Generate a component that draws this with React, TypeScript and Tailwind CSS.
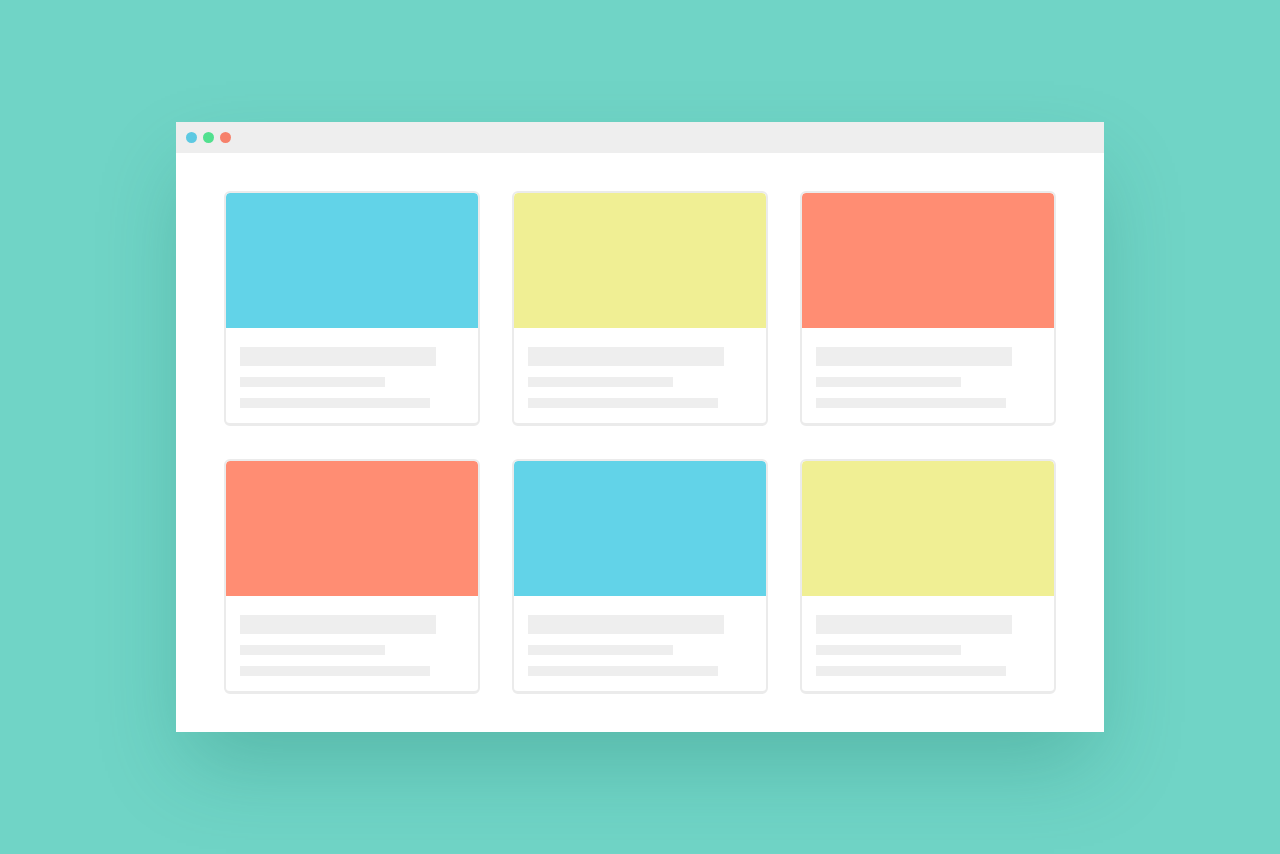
const CARDS = ["#62d3e8", "#f0ef94", "#ff8d73", "#ff8d73", "#62d3e8", "#f0ef94"];

function Card({ color }: { color: string }) {
  return (
    <div className="flex h-[235px] flex-col overflow-hidden rounded-[6px] border-2 border-b-[3px] border-[#ebebeb] bg-white">
      <div className="h-[135px] rounded-t-[4px]" style={{ backgroundColor: color }} />
      <div className="flex flex-col px-[12px] pt-[19px]">
        <div className="ml-[2px] h-[19px] w-[196px] bg-[#eeeeee]" />
        <div className="ml-[2px] mt-[11px] h-[10px] w-[145px] bg-[#eeeeee]" />
        <div className="ml-[2px] mt-[11px] h-[10px] w-[190px] bg-[#eeeeee]" />
      </div>
    </div>
  );
}

export default function App() {
  return (
    <main className="flex h-[854px] w-full items-center justify-center bg-[#70d4c6]">
      <div className="w-[928px] bg-white shadow-[0_40px_80px_-10px_rgba(20,110,95,0.28)]">
        <div className="flex h-[31px] items-center gap-[6px] bg-[#eeeeee] pl-[10px]">
          <span className="h-[11px] w-[11px] rounded-full bg-[#5dc9e2]" />
          <span className="h-[11px] w-[11px] rounded-full bg-[#52e08f]" />
          <span className="h-[11px] w-[11px] rounded-full bg-[#f6816b]" />
        </div>
        <div className="grid grid-cols-3 gap-x-8 gap-y-[33px] px-12 py-[38px]">
          {CARDS.map((c, i) => (
            <Card key={i} color={c} />
          ))}
        </div>
      </div>
    </main>
  );
}
